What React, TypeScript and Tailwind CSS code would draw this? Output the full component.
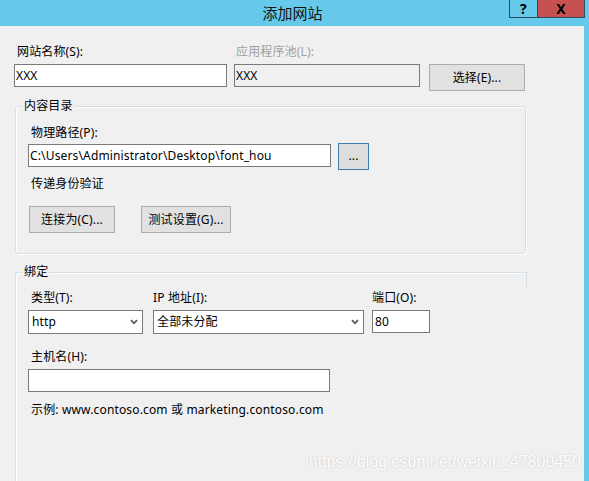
import React from 'react';

const font = "font-['Noto_Sans','Noto_Sans_CJK_SC',sans-serif]";

function Chevron() {
  return (
    <svg width="8" height="6" viewBox="0 0 8 6" className="shrink-0">
      <path d="M1 1.2 L4 4.3 L7 1.2" fill="none" stroke="#5a5a5a" strokeWidth="1.8" />
    </svg>
  );
}

function Select({ value, width }: { value: string; width: string }) {
  return (
    <div className={`${width} h-[24px] mt-[4px] bg-white border border-[#7a7a7a] flex items-center justify-between pl-[3px] pr-[4px]`}>
      <span>{value}</span>
      <Chevron />
    </div>
  );
}

function Button({ label, className = '' }: { label: string; className?: string }) {
  return (
    <div className={`h-[27px] bg-[#e1e1e1] border border-[#adadad] flex items-center justify-center ${className}`}>
      {label}
    </div>
  );
}

export default function App() {
  return (
    <div className={`w-[589px] h-[481px] bg-[#66c9ea] flex flex-col overflow-hidden text-[12px] tracking-[0.15px] text-[#000] ${font}`}>
      {/* Title bar */}
      <div className="h-[26px] shrink-0 grid grid-cols-[1fr_auto_1fr] w-[585px]">
        <div />
        <div className="text-[15px] leading-[24px] pt-[1px] text-[#111] tracking-normal">添加网站</div>
        <div className="flex justify-end items-start">
          <div className="w-[29px] h-[18px] border border-[#2a4f63] border-t-0 flex items-center justify-center text-[14px] font-bold leading-none">?</div>
          <div className="w-[47px] h-[18px] bg-[#c75050] border border-[#2a4f63] border-t-0 border-l-0 flex items-center justify-center text-[14px] font-bold leading-none">X</div>
        </div>
      </div>

      <div className="flex-1 flex">
        <div className="w-[584px] bg-[#f0f0f0] relative flex flex-col">
          {/* Site name row */}
          <div className="flex items-start mt-[18px] pl-[14px]">
            <div className="w-[213px]">
              <div className="h-[16px] leading-[16px] pl-[3px]">网站名称(S):</div>
              <div className="h-[23px] mt-[4px] bg-white border border-[#7a7a7a] flex items-center pl-[1px]">XXX</div>
            </div>
            <div className="w-[186px] ml-[7px]">
              <div className="h-[16px] leading-[16px] pl-[2px] text-[#a0a0a0]">应用程序池(L):</div>
              <div className="h-[23px] mt-[4px] bg-[#f0f0f0] border border-[#7a7a7a] flex items-center pl-[1px]">XXX</div>
            </div>
            <Button label="选择(E)..." className="w-[96px] ml-[9px] mt-[20px]" />
          </div>

          {/* Content directory group */}
          <div className="relative ml-[15px] mt-[15px] w-[511px] h-[148px] border border-[#d5dfe5] rounded-[3px] shadow-[inset_1px_1px_0_#fff,1px_1px_0_#fff] pt-[18px] pl-[12px]">
            <div className="absolute -top-[9px] left-[7px] bg-[#f0f0f0] px-[1px] leading-[16px]">内容目录</div>
            <div className="h-[16px] leading-[16px] pl-[3px]">物理路径(P):</div>
            <div className="flex items-start mt-[2px]">
              <div className="w-[303px] h-[23px] mt-[1px] bg-white border border-[#7a7a7a] flex items-center pl-[1px]">
                C:\Users\Administrator\Desktop\font_hou
              </div>
              <div className="w-[31px] h-[27px] ml-[7px] bg-[#dddddd] border border-[#3c7fb1] flex items-center justify-center leading-none pb-[2px]">...</div>
            </div>
            <div className="h-[16px] leading-[16px] pl-[3px] mt-[6px]">传递身份验证</div>
            <div className="flex mt-[14px] pl-[1px]">
              <Button label="连接为(C)..." className="w-[86px]" />
              <Button label="测试设置(G)..." className="w-[90px] ml-[26px]" />
            </div>
          </div>

          {/* Binding group */}
          <div className="relative ml-[15px] mt-[18px] w-[511px] flex-1 border-t border-l border-[#d5dfe5] rounded-tl-[3px] shadow-[inset_1px_1px_0_#fff] pt-[17px] pl-[12px]">
            <div className="absolute -top-[9px] left-[7px] bg-[#f0f0f0] px-[1px] leading-[16px]">绑定</div>
            <div className="absolute -top-[1px] -right-[1px] w-[1px] h-[17px] bg-[#d5dfe5]" />
            <div className="flex items-start">
              <div className="w-[115px]">
                <div className="h-[16px] leading-[16px] pl-[3px]">类型(T):</div>
                <Select value="http" width="w-[115px]" />
              </div>
              <div className="w-[211px] ml-[10px]">
                <div className="h-[16px] leading-[16px]">IP 地址(I):</div>
                <Select value="全部未分配" width="w-[211px]" />
              </div>
              <div className="w-[58px] ml-[8px]">
                <div className="h-[16px] leading-[16px]">端口(O):</div>
                <div className="h-[23px] mt-[4px] bg-white border border-[#7a7a7a] flex items-center pl-[2px]">80</div>
              </div>
            </div>
            <div className="h-[16px] leading-[16px] pl-[3px] mt-[15px]">主机名(H):</div>
            <div className="w-[302px] h-[23px] mt-[4px] bg-white border border-[#7a7a7a]" />
            <div className="h-[16px] leading-[16px] pl-[3px] mt-[10px]">示例: www.contoso.com 或 marketing.contoso.com</div>
          </div>

          {/* Watermark */}
          <div className="absolute right-[3px] bottom-[7px] font-['Liberation_Sans',sans-serif] text-[16px] tracking-normal text-white [text-shadow:0_0_2px_#c0c0c0]">
            https://blog.csdn.net/weixin_47800450
          </div>
        </div>
      </div>
    </div>
  );
}
